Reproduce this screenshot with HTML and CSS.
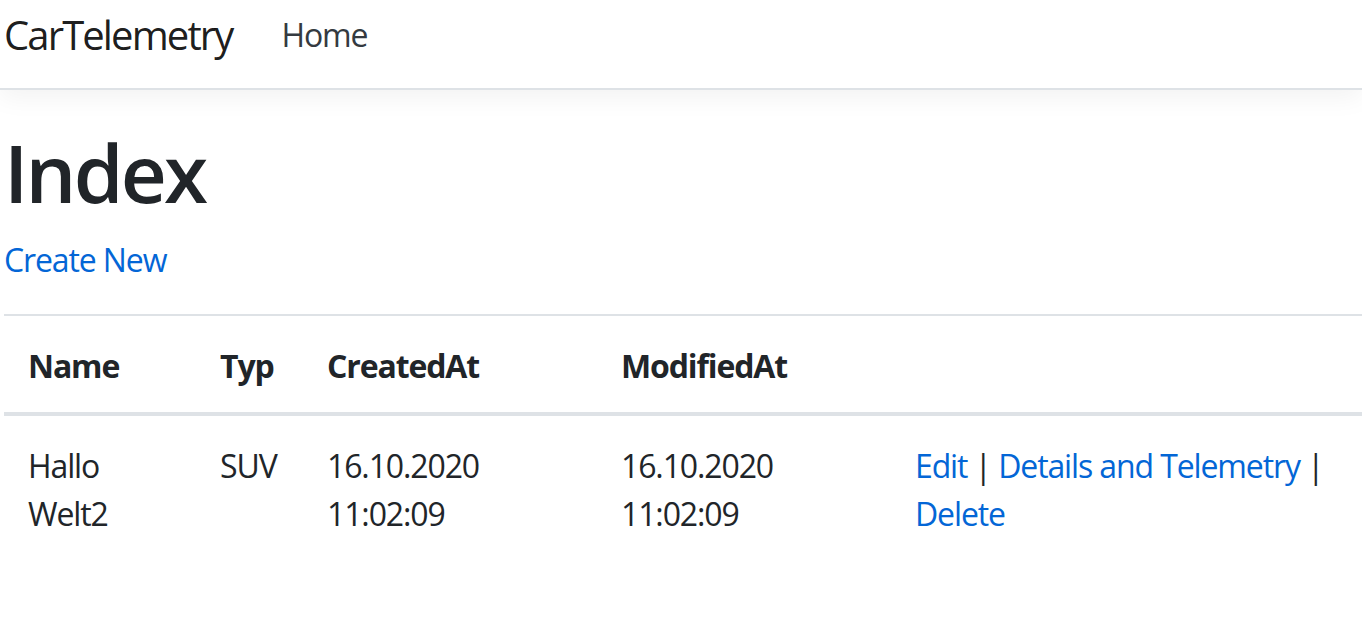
FILE: index.html
```html
<!DOCTYPE html>
<html lang="en">
<head>
<meta charset="utf-8">
<title>Index - CarTelemetry</title>
<link rel="stylesheet" href="styles.css">
</head>
<body>
<header class="navbar">
  <a class="brand" href="#">CarTelemetry</a>
  <nav class="nav">
    <a class="nav-link" href="#">Home</a>
  </nav>
</header>
<main class="main">
  <h1 class="title">Index</h1>
  <p class="create"><a href="#">Create New</a></p>
  <table class="table">
    <thead>
      <tr>
        <th class="c-name">Name</th>
        <th class="c-typ">Typ</th>
        <th class="c-date">CreatedAt</th>
        <th class="c-date">ModifiedAt</th>
        <th></th>
      </tr>
    </thead>
    <tbody>
      <tr>
        <td>Hallo Welt2</td>
        <td>SUV</td>
        <td>16.10.2020 11:02:09</td>
        <td>16.10.2020 11:02:09</td>
        <td><a href="#">Edit</a> | <a href="#">Details and Telemetry</a> | <a href="#">Delete</a></td>
      </tr>
    </tbody>
  </table>
</main>
</body>
</html>
```

FILE: styles.css
```css
html, body {
  margin: 0;
  padding: 0;
  background: #fff;
}
body {
  font-family: "Open Sans", "Noto Sans", sans-serif;
  font-size: 32px;
  line-height: 1.5;
  letter-spacing: -0.035em;
  color: #212529;
}
a {
  color: #0366d6;
  text-decoration: none;
}
.navbar {
  display: flex;
  align-items: center;
  height: 90px;
  padding: 0 0 18px 4px;
  border-bottom: 2px solid #dee2e6;
  box-shadow: 0 8px 24px rgba(0, 0, 0, 0.05);
  box-sizing: border-box;
}
.brand {
  font-size: 40px;
  letter-spacing: -0.047em;
  color: rgba(0, 0, 0, 0.9);
  margin-right: 49px;
  line-height: 60px;
}
.nav-link {
  color: #343a40;
  font-size: 32px;
  line-height: 48px;
}
.main {
  padding: 34px 0 0 4px;
}
.title {
  margin: 0 0 16px;
  font-size: 80px;
  font-weight: 600;
  letter-spacing: -0.035em;
  line-height: 1.2;
}
.create {
  margin: 0 0 30px;
}
.table {
  width: 100%;
  border-collapse: collapse;
}
.table th, .table td {
  padding: 26px 24px 22px;
  text-align: left;
  vertical-align: top;
  border-top: 2px solid #dee2e6;
}
.table th {
  font-weight: 700;
  vertical-align: bottom;
  border-bottom: 4px solid #dee2e6;
}
.c-name { width: 144px; }
.c-typ { width: 59px; }
.c-date { width: 246px; }
```
